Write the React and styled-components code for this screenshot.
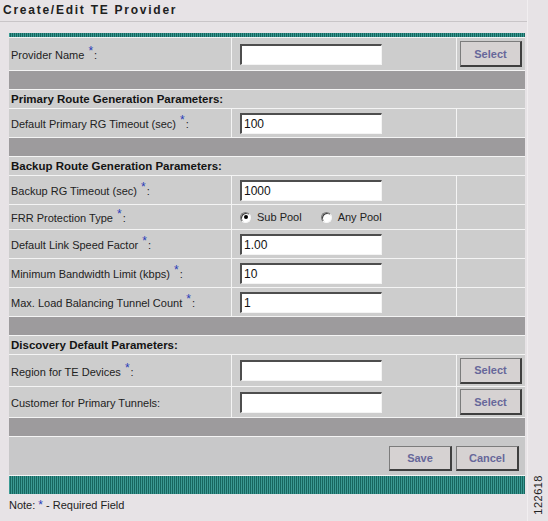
import React from "react";
import styled, { createGlobalStyle } from "styled-components";

const GlobalStyle = createGlobalStyle`
  html, body {
    margin: 0;
    padding: 0;
    background: #e7e3e6;
  }
  body {
    font-family: "Liberation Sans", Arial, sans-serif;
    color: #1e1e1e;
  }
`;

const fields = [
  { type: "field", label: "Provider Name", req: true, value: "", select: true, h: 32 },
  { type: "sep" },
  { type: "header", text: "Primary Route Generation Parameters:" },
  { type: "field", label: "Default Primary RG Timeout (sec)", req: true, value: "100", h: 28 },
  { type: "sep" },
  { type: "header", text: "Backup Route Generation Parameters:" },
  { type: "field", label: "Backup RG Timeout (sec)", req: true, value: "1000", h: 28 },
  { type: "radio", label: "FRR Protection Type", req: true, h: 24 },
  { type: "field", label: "Default Link Speed Factor", req: true, value: "1.00", h: 28 },
  { type: "field", label: "Minimum Bandwidth Limit (kbps)", req: true, value: "10", h: 28 },
  { type: "field", label: "Max. Load Balancing Tunnel Count", req: true, value: "1", h: 28 },
  { type: "sep" },
  { type: "header", text: "Discovery Default Parameters:" },
  { type: "field", label: "Region for TE Devices", req: true, value: "", select: true, h: 31 },
  { type: "field", label: "Customer for Primary Tunnels:", value: "", select: true, h: 30 },
  { type: "sep" },
];

const Label = ({ text, req }) => (
  <LabelCell>
    {text}
    {req && (
      <>
        {" "}
        <Star>*</Star>:
      </>
    )}
  </LabelCell>
);

const App = () => {
  return (
    <Page>
      <GlobalStyle />
      <Main>
        <Title>Create/Edit TE Provider</Title>
        <Table>
          <Teal h={4} />
          {fields.map((f, i) => {
            if (f.type === "sep") return <SepRow key={i} />;
            if (f.type === "header") return <HeaderRow key={i}>{f.text}</HeaderRow>;
            if (f.type === "radio")
              return (
                <React.Fragment key={i}>
                  <Label text={f.label} req={f.req} />
                  <FieldCell h={f.h}>
                    <RadioGroup>
                      <RadioOption>
                        <Radio checked />
                        Sub Pool
                      </RadioOption>
                      <RadioOption>
                        <Radio />
                        Any Pool
                      </RadioOption>
                    </RadioGroup>
                  </FieldCell>
                  <ExtraCell />
                </React.Fragment>
              );
            return (
              <React.Fragment key={i}>
                <Label text={f.label} req={f.req} />
                <FieldCell h={f.h}>
                  <TextInput defaultValue={f.value} />
                </FieldCell>
                <ExtraCell>{f.select && <Button>Select</Button>}</ExtraCell>
              </React.Fragment>
            );
          })}
          <ActionRow>
            <Button wide>Save</Button>
            <Button wide>Cancel</Button>
          </ActionRow>
          <Teal h={18} />
        </Table>
        <Note>
          Note: <NoteStar>*</NoteStar> - Required Field
        </Note>
      </Main>
      <Side>
        <FigNumber>122618</FigNumber>
      </Side>
    </Page>
  );
};

export default App;

const Page = styled.div`
  display: flex;
  width: 548px;
  height: 521px;
  overflow: hidden;
  background: #e7e3e6;
`;

const Main = styled.div`
  width: 527px;
  border-right: 1px solid #f1eef0;
  display: flex;
  flex-direction: column;
`;

const Title = styled.div`
  height: 21px;
  line-height: 21px;
  padding-left: 3px;
  border-bottom: 1px solid #c9c5c8;
  font-size: 12px;
  font-weight: bold;
  letter-spacing: 1.75px;
  color: #202020;
`;

const Table = styled.div`
  margin: 11px 0 0 9px;
  width: 516px;
  display: grid;
  grid-template-columns: 222px 224px 68px;
  gap: 1px;
  background: #f4f4f4;
`;

const Teal = styled.div`
  grid-column: 1 / -1;
  height: ${(p) => p.h}px;
  background: repeating-linear-gradient(
    90deg,
    #3b9a93 0 1px,
    #17665f 1px 2px
  );
`;

const SepRow = styled.div`
  grid-column: 1 / -1;
  height: 18px;
  background: #9d9b9d;
`;

const HeaderRow = styled.div`
  grid-column: 1 / -1;
  height: 18px;
  line-height: 18px;
  padding-left: 2px;
  background: #cecece;
  font-size: 11.5px;
  font-weight: bold;
  color: #141414;
`;

const LabelCell = styled.div`
  display: flex;
  align-items: center;
  padding: 2px 0 0 2px;
  background: #cdcdcd;
  font-size: 11px;
  color: #222;
  white-space: pre;
`;

const Star = styled.span`
  color: #2a3cb8;
  font-size: 12px;
  position: relative;
  top: -4px;
  margin: 0 1px 0 1px;
`;

const FieldCell = styled.div`
  height: ${(p) => p.h}px;
  display: flex;
  align-items: center;
  padding-left: 8px;
  background: #cdcdcd;
`;

const ExtraCell = styled.div`
  display: flex;
  align-items: center;
  justify-content: center;
  background: #cdcdcd;
`;

const TextInput = styled.input`
  box-sizing: border-box;
  width: 142px;
  height: 21px;
  margin: 0;
  padding: 1px 2px 0;
  background: #fff;
  border-top: 2px solid #4e4e4e;
  border-left: 2px solid #4e4e4e;
  border-bottom: 1px solid #f4f4f4;
  border-right: 1px solid #f4f4f4;
  font-family: "Liberation Sans", Arial, sans-serif;
  font-size: 12px;
  color: #111;
  outline: none;
`;

const RadioGroup = styled.div`
  display: flex;
  align-items: center;
  gap: 19px;
  font-size: 11px;
  color: #222;
`;

const RadioOption = styled.label`
  display: flex;
  align-items: center;
  gap: 6px;
`;

const Radio = styled.span`
  box-sizing: border-box;
  width: 11px;
  height: 11px;
  border-radius: 50%;
  background: #fff;
  border: 1px solid;
  border-color: #7a7a7a #f6f6f6 #f6f6f6 #7a7a7a;
  box-shadow: inset 1px 1px 0 #404040;
  position: relative;
  &::after {
    content: "";
    display: ${(p) => (p.checked ? "block" : "none")};
    position: absolute;
    left: 2.5px;
    top: 2.5px;
    width: 4px;
    height: 4px;
    border-radius: 50%;
    background: #000;
  }
`;

const Button = styled.button`
  box-sizing: border-box;
  width: ${(p) => (p.wide ? 63 : 62)}px;
  height: ${(p) => (p.wide ? 25 : 26)}px;
  margin: 0;
  padding: 0;
  background: #d6d2d2;
  border-top: 1px solid #7c7c7c;
  border-left: 1px solid #7c7c7c;
  border-right: 2px solid #3f3f3f;
  border-bottom: 2px solid #3f3f3f;
  font-family: "Liberation Sans", Arial, sans-serif;
  font-size: 11px;
  font-weight: bold;
  color: #67679a;
  cursor: pointer;
`;

const ActionRow = styled.div`
  grid-column: 1 / -1;
  height: 38px;
  display: flex;
  align-items: center;
  justify-content: flex-end;
  gap: 4px;
  padding-right: 6px;
  padding-top: 5px;
  box-sizing: border-box;
  background: #c8c8c9;
`;

const Note = styled.div`
  margin: 4px 0 0 9px;
  font-size: 11px;
  line-height: 14px;
  color: #222;
`;

const NoteStar = styled.span`
  color: #2a3cb8;
  font-size: 12px;
`;

const Side = styled.div`
  flex: 1;
  display: flex;
  align-items: flex-end;
  justify-content: center;
  padding-bottom: 6px;
`;

const FigNumber = styled.div`
  writing-mode: vertical-rl;
  transform: rotate(180deg);
  font-size: 11px;
  letter-spacing: 0.5px;
  color: #222;
`;
